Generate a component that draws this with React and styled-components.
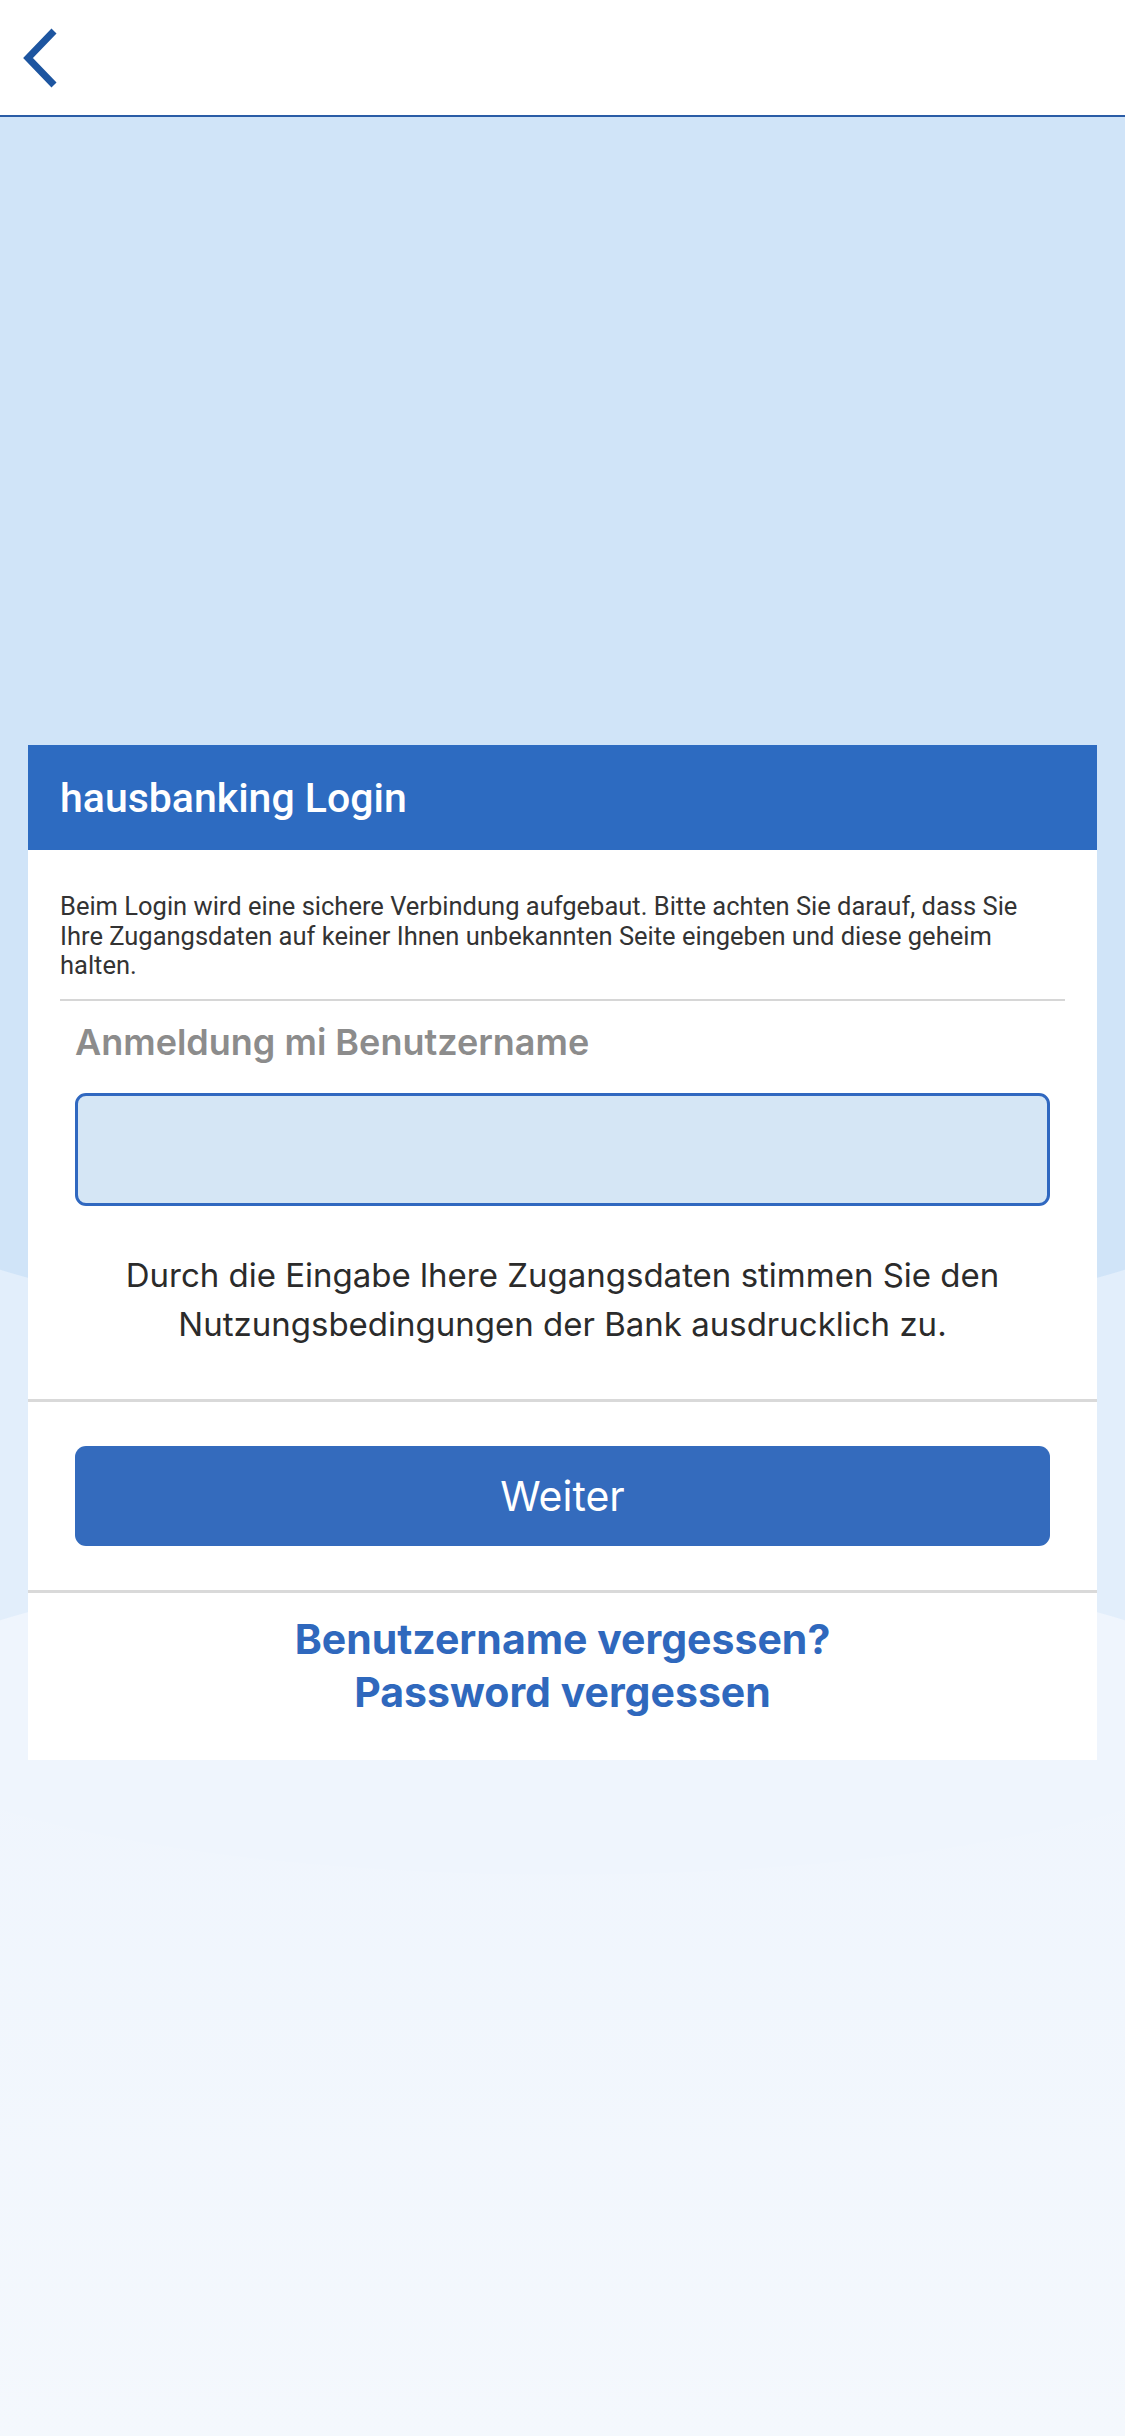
import React from "react";
import styled, { createGlobalStyle } from "styled-components";

const GlobalStyle = createGlobalStyle`
  html, body {
    margin: 0;
    padding: 0;
  }
  body {
    font-family: "Inter", "Roboto", "Liberation Sans", sans-serif;
    background: #f4f8fd;
  }
  * {
    box-sizing: border-box;
  }
`;

const Page = styled.div`
  display: flex;
  flex-direction: column;
  min-height: 2436px;
`;

const TopBar = styled.header`
  display: flex;
  align-items: center;
  height: 117px;
  padding-left: 20px;
  background: #ffffff;
  border-bottom: 2px solid #2a5ca6;
`;

const BackButton = styled.button`
  display: flex;
  align-items: center;
  justify-content: center;
  padding: 0;
  border: none;
  background: transparent;
  cursor: pointer;
`;

const Main = styled.main`
  flex: 1;
  padding: 628px 28px 0;
  background:
    radial-gradient(ellipse 700px 160px at 50% 1058px, #d0e4f8 99.6%, transparent 100%),
    linear-gradient(to bottom, #d0e4f8 0, #d0e4f8 1058px, transparent 1058px),
    radial-gradient(ellipse 700px 160px at 50% 1598px, #eff5fd 99.6%, transparent 100%),
    linear-gradient(to bottom, transparent 1598px, #eff5fd 1598px, #f4f8fd 100%),
    #e2eefb;
`;

const Card = styled.section`
  background: #ffffff;
`;

const CardHeader = styled.div`
  display: flex;
  align-items: center;
  height: 105px;
  padding: 0 32px;
  background: #2d6bc1;
`;

const Title = styled.h1`
  margin: 0;
  font-family: "Roboto", "Liberation Sans", sans-serif;
  font-size: 41px;
  font-weight: 500;
  color: #ffffff;
`;

const Intro = styled.p`
  margin: 0;
  padding: 42px 32px 18px;
  font-family: "Roboto", "Liberation Sans", sans-serif;
  font-size: 25.5px;
  line-height: 29.5px;
  color: #333333;
`;

const InsetRule = styled.hr`
  margin: 0 32px;
  height: 2px;
  border: none;
  background: #d6d6d6;
`;

const FieldBlock = styled.div`
  display: flex;
  flex-direction: column;
  padding: 19px 47px 50px;
`;

const Label = styled.label`
  font-size: 36px;
  font-weight: 600;
  color: #8c8c8c;
`;

const TextInput = styled.input`
  margin-top: 29px;
  height: 113px;
  width: 100%;
  padding: 0 20px;
  border: 3px solid #3068c0;
  border-radius: 11px;
  background: #d5e6f5;
  font-size: 32px;
  outline: none;
`;

const Terms = styled.p`
  margin: 45px 0 0;
  text-align: center;
  font-size: 33px;
  line-height: 49px;
  color: #2b2b2b;
`;

const Section = styled.div`
  display: flex;
  flex-direction: column;
  align-items: ${(p) => (p.$center ? "center" : "stretch")};
  padding: ${(p) => p.$pad};
  border-top: 3px solid #d9d9d9;
`;

const PrimaryButton = styled.button`
  height: 100px;
  border: none;
  border-radius: 11px;
  background: #346bbd;
  font-family: "Inter", "Liberation Sans", sans-serif;
  font-size: 41px;
  font-weight: 400;
  color: #ffffff;
  cursor: pointer;
`;

const TextLink = styled.a`
  font-size: 41px;
  line-height: 53px;
  font-weight: 700;
  color: #2f68bd;
  text-decoration: none;
`;

function BackChevron() {
  return (
    <svg width="40" height="64" viewBox="0 0 40 64">
      <polyline
        points="34,5 8,32 34,59"
        fill="none"
        stroke="#1d55a0"
        strokeWidth="7"
        strokeLinejoin="miter"
      />
    </svg>
  );
}

export default function App() {
  return (
    <>
      <GlobalStyle />
      <Page>
        <TopBar>
          <BackButton aria-label="Zurück">
            <BackChevron />
          </BackButton>
        </TopBar>
        <Main>
          <Card>
            <CardHeader>
              <Title>hausbanking Login</Title>
            </CardHeader>
            <Intro>
              Beim Login wird eine sichere Verbindung aufgebaut. Bitte achten
              Sie darauf, dass Sie Ihre Zugangsdaten auf keiner Ihnen
              unbekannten Seite eingeben und diese geheim halten.
            </Intro>
            <InsetRule />
            <FieldBlock>
              <Label htmlFor="user">Anmeldung mi Benutzername</Label>
              <TextInput id="user" type="text" />
              <Terms>
                Durch die Eingabe lhere Zugangsdaten stimmen Sie den
                Nutzungsbedingungen der Bank ausdrucklich zu.
              </Terms>
            </FieldBlock>
            <Section $pad="44px 47px">
              <PrimaryButton>Weiter</PrimaryButton>
            </Section>
            <Section $pad="20px 32px 41px" $center>
              <TextLink href="#">Benutzername vergessen?</TextLink>
              <TextLink href="#">Password vergessen</TextLink>
            </Section>
          </Card>
        </Main>
      </Page>
    </>
  );
}
